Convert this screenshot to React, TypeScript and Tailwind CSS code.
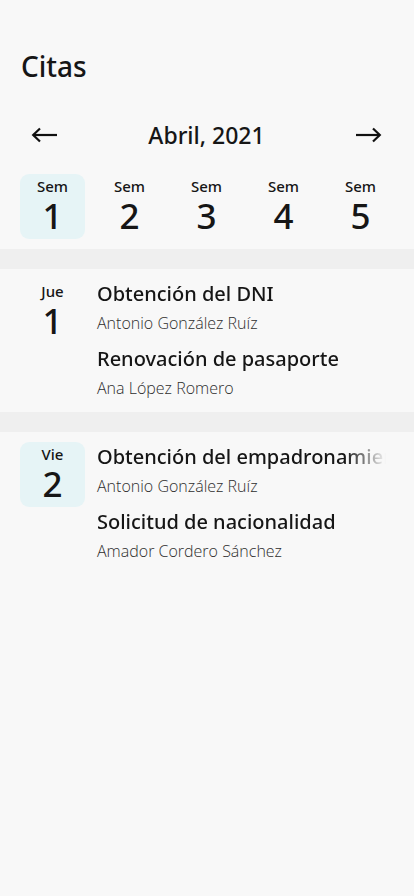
import { useState } from "react";

const weeks = [1, 2, 3, 4, 5];

const days = [
  {
    label: "Jue",
    num: 1,
    selected: false,
    items: [
      { title: "Obtención del DNI", name: "Antonio González Ruíz" },
      { title: "Renovación de pasaporte", name: "Ana López Romero" },
    ],
  },
  {
    label: "Vie",
    num: 2,
    selected: true,
    items: [
      { title: "Obtención del empadronamiento", name: "Antonio González Ruíz" },
      { title: "Solicitud de nacionalidad", name: "Amador Cordero Sánchez" },
    ],
  },
];

const Arrow = ({ dir }: { dir: "left" | "right" }) => (
  <svg width="26" height="16" viewBox="0 0 26 16" fill="none" stroke="#111" strokeWidth="2.2" strokeLinecap="butt">
    {dir === "left" ? (
      <>
        <path d="M2 8h24" />
        <path d="M9 1.5L2.2 8L9 14.5" />
      </>
    ) : (
      <>
        <path d="M0 8h24" />
        <path d="M17 1.5L23.8 8L17 14.5" />
      </>
    )}
  </svg>
);

const App = () => {
  const [week, setWeek] = useState(1);

  return (
    <div className="min-h-screen w-full bg-[#f8f8f8] text-[#161616] font-['Noto_Sans',sans-serif]">
      {/* Header */}
      <h1 className="pt-[48px] px-[21px] text-[28px] leading-[36px] font-medium">Citas</h1>

      {/* Month switch */}
      <div className="mt-[31px] h-[40px] flex items-center justify-between pl-[31px] pr-[32px]">
        <button className="w-[27px] flex items-center">
          <Arrow dir="left" />
        </button>
        <span className="text-[23px] leading-[40px] font-medium">Abril, 2021</span>
        <button className="w-[27px] flex items-center justify-end">
          <Arrow dir="right" />
        </button>
      </div>

      {/* Weeks */}
      <div className="mt-[19px] flex justify-between pl-[20px] pr-[21px]">
        {weeks.map((w) => (
          <button
            key={w}
            onClick={() => setWeek(w)}
            className={`w-[65px] h-[65px] rounded-[9px] flex flex-col items-center pt-[2px] ${
              week === w ? "bg-[#e6f4f6]" : ""
            }`}
          >
            <span className="text-[15px] leading-[20px] font-medium">Sem</span>
            <span className="text-[35px] leading-[40px] font-medium">{w}</span>
          </button>
        ))}
      </div>

      <div className="mt-[10px] h-[20px] bg-[#efefef]" />

      {/* Days */}
      {days.map((d, i) => (
        <div key={d.label}>
          {i > 0 && <div className="h-[20px] bg-[#efefef]" />}
          <div className="flex gap-[12px] py-[10px] pl-[20px] pr-[28px]">
            <div
              className={`w-[65px] h-[65px] shrink-0 rounded-[9px] flex flex-col items-center pt-[2px] ${
                d.selected ? "bg-[#e6f4f6]" : ""
              }`}
            >
              <span className="text-[15px] leading-[20px] font-medium">{d.label}</span>
              <span className="text-[35px] leading-[40px] font-medium">{d.num}</span>
            </div>
            <div className="flex-1 min-w-0 flex flex-col gap-[7px]">
              {d.items.map((it) => (
                <div key={it.title}>
                  <p className="text-[20px] leading-[30px] font-medium whitespace-nowrap overflow-hidden [mask-image:linear-gradient(to_right,black_86%,transparent)]">
                    {it.title}
                  </p>
                  <p className="text-[16px] leading-[28px] font-light font-['Open_Sans',sans-serif] text-[#2e2e2e]">
                    {it.name}
                  </p>
                </div>
              ))}
            </div>
          </div>
        </div>
      ))}
    </div>
  );
};

export default App;
